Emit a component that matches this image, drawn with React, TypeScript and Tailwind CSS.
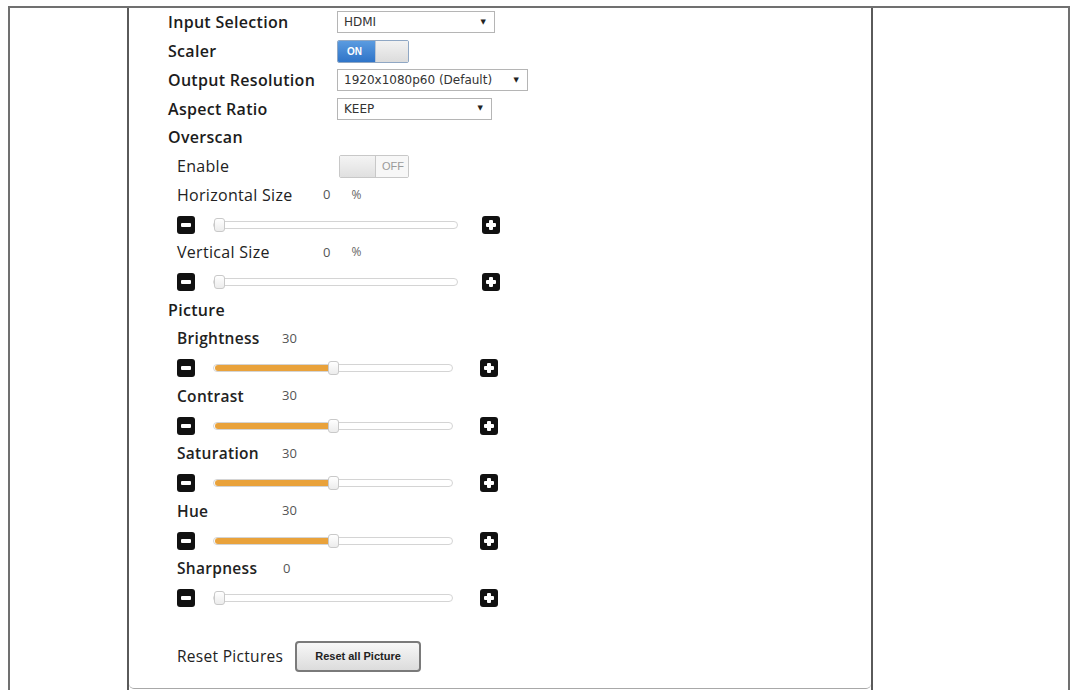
import type { ReactNode } from "react";

const font = { fontFamily: '"Open Sans", "DejaVu Sans", sans-serif' };
const arial = { fontFamily: '"Liberation Sans", Arial, sans-serif' };
const dejavu = { fontFamily: '"DejaVu Sans", Verdana, sans-serif' };

function Row({ children, className = "" }: { children: ReactNode; className?: string }) {
  return <div className={`flex h-[28.75px] items-center ${className}`}>{children}</div>;
}

function Select({ value, width }: { value: string; width: string }) {
  return (
    <div
      style={dejavu}
      className={`flex h-[22px] ${width} items-center justify-between border border-[#b5b5b5] bg-white pl-[6px] pr-[8px] text-[12px] text-[#333]`}
    >
      <span>{value}</span>
      <span className="text-[7px] text-[#222]">▼</span>
    </div>
  );
}

function Toggle({ on }: { on: boolean }) {
  if (on) {
    return (
      <div className="flex h-[23px] w-[72px] overflow-hidden rounded-[2px] border border-[#8fa7c4]">
        <div
          style={arial}
          className="flex w-[37px] items-center pl-[9px] text-[10px] font-bold text-white bg-gradient-to-b from-[#5a9be0] to-[#2f74c8]"
        >
          ON
        </div>
        <div className="flex-1 border-l border-[#b9c4d2] bg-gradient-to-b from-[#f2f2f2] to-[#dcdcdc]" />
      </div>
    );
  }
  return (
    <div className="flex h-[23px] w-[70px] overflow-hidden rounded-[2px] border border-[#c8c8c8]">
      <div className="w-[36px] border-r border-[#c8c8c8] bg-gradient-to-b from-[#f4f4f4] to-[#e0e0e0]" />
      <div
        style={arial}
        className="flex flex-1 items-center pl-[6px] text-[11px] text-[#9a9a9a] bg-[#f7f7f7]"
      >
        OFF
      </div>
    </div>
  );
}

function Btn({ plus }: { plus?: boolean }) {
  return (
    <div className="relative h-[18px] w-[18px] rounded-[3px] bg-[#111]">
      <div className="absolute left-[4px] top-[7px] h-[4px] w-[10px] rounded-[1px] bg-white" />
      {plus && <div className="absolute left-[7px] top-[4px] h-[10px] w-[4px] rounded-[1px] bg-white" />}
    </div>
  );
}

function Slider({ fill, wide }: { fill: boolean; wide?: boolean }) {
  return (
    <Row className="pl-[48px] pt-[2px]">
      <Btn />
      <div className={`relative ml-[18px] h-[8px] ${wide ? "w-[245px]" : "w-[240px]"} rounded-full border border-[#d4d4d4] bg-white`}>
        {fill && <div className="absolute left-[1px] top-[0px] h-[6px] w-[118px] rounded-l-full bg-[#e9a23b]" />}
        <div
          className={`absolute top-[-4px] h-[14px] w-[11px] rounded-[3px] border border-[#c9c9c9] bg-gradient-to-b from-white to-[#ececec] ${
            fill ? "left-[114px]" : "left-[0px]"
          }`}
        />
      </div>
      <div className={wide ? "ml-[24px]" : "ml-[27px]"}>
        <Btn plus />
      </div>
    </Row>
  );
}

function Section({ label, children }: { label: string; children?: ReactNode }) {
  return (
    <Row className="pl-[39px]">
      <div className="w-[169px] text-[16px] font-semibold tracking-[0.3px] text-[#1c1c1c]">{label}</div>
      {children}
    </Row>
  );
}

function Sub({ label, value, suffix, vx, bold = true }: { label: string; value?: string; suffix?: string; vx: string; bold?: boolean }) {
  return (
    <Row className="pl-[48px]">
      <div
        className={`${vx} tracking-[0.3px] text-[#222] ${bold ? "text-[15.5px] font-semibold" : "text-[16px] font-medium"}`}
      >
        {label}
      </div>
      {value !== undefined && <div className="text-[13px] text-[#555]">{value}</div>}
      {suffix && <div className="ml-[21px] text-[12px] text-[#666]">{suffix}</div>}
    </Row>
  );
}

export default function App() {
  return (
    <div style={font} className="h-[690px] w-[1071px] overflow-hidden bg-white">
      <div className="ml-[8px] mt-[6px] flex h-[700px] w-[1062px] border-x-2 border-t-2 border-[#707070]">
        <div className="w-[117px]" />
        <div className="w-[746px] border-x-2 border-[#5a5a5a]">
          <div className="flex h-[681px] flex-col rounded-b-[5px] border-b border-[#a8a8a8]">
            <Section label="Input Selection">
              <Select value="HDMI" width="w-[158px]" />
            </Section>
            <Section label="Scaler">
              <Toggle on />
            </Section>
            <Section label="Output Resolution">
              <Select value="1920x1080p60 (Default)" width="w-[191px]" />
            </Section>
            <Section label="Aspect Ratio">
              <Select value="KEEP" width="w-[155px]" />
            </Section>
            <Section label="Overscan" />
            <Row className="pl-[48px]">
              <div className="w-[162px] text-[16px] font-medium tracking-[0.3px] text-[#222]">Enable</div>
              <Toggle on={false} />
            </Row>
            <Sub label="Horizontal Size" value="0" suffix="%" vx="w-[146px]" bold={false} />
            <Slider fill={false} wide />
            <Sub label="Vertical Size" value="0" suffix="%" vx="w-[146px]" bold={false} />
            <Slider fill={false} wide />
            <Section label="Picture" />
            <Sub label="Brightness" value="30" vx="w-[105px]" />
            <Slider fill />
            <Sub label="Contrast" value="30" vx="w-[105px]" />
            <Slider fill />
            <Sub label="Saturation" value="30" vx="w-[105px]" />
            <Slider fill />
            <Sub label="Hue" value="30" vx="w-[105px]" />
            <Slider fill />
            <Sub label="Sharpness" value="0" vx="w-[106px]" />
            <Slider fill={false} />
            <div className="mt-[30px] flex h-[29px] items-center pl-[48px]">
              <div className="w-[118px] text-[15.5px] tracking-[0.3px] text-[#222]">Reset Pictures</div>
              <button
                style={arial}
                className="h-[31px] w-[126px] rounded-[4px] border-2 border-[#7a7a7a] bg-gradient-to-b from-[#f7f7f7] to-[#dcdcdc] text-[11px] font-bold text-[#222]"
              >
                Reset all Picture
              </button>
            </div>
          </div>
        </div>
        <div className="flex-1" />
      </div>
    </div>
  );
}
